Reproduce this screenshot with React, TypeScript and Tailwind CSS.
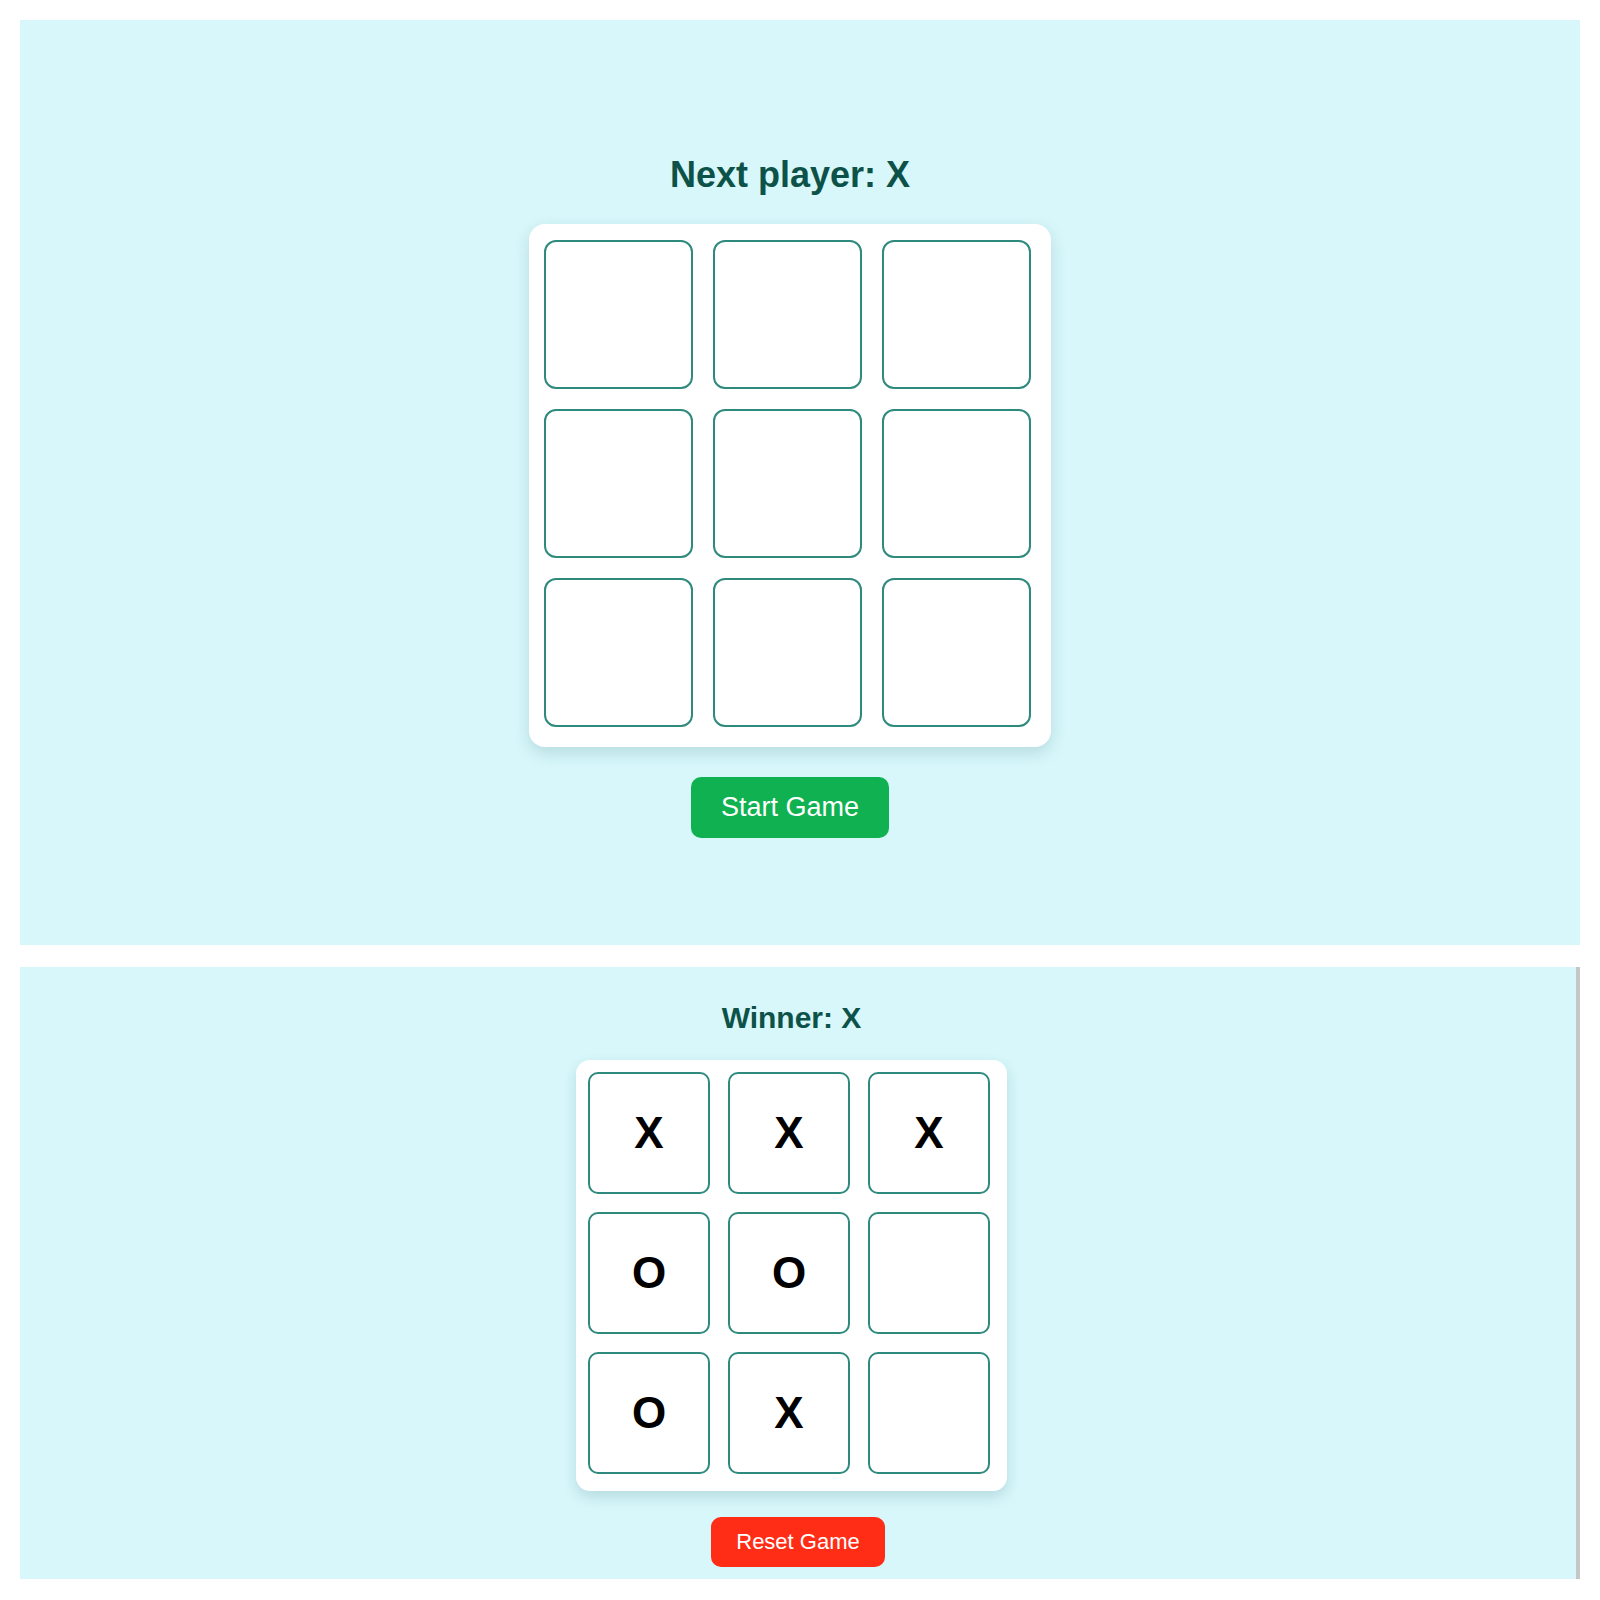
import { useState } from "react";

type Cell = "X" | "O" | null;

const FONT = { fontFamily: '"Liberation Sans", Arial, sans-serif' };

const emptyBoard: Cell[] = Array(9).fill(null);
const finishedBoard: Cell[] = ["X", "X", "X", "O", "O", null, "O", "X", null];

const App = () => {
  const [board, setBoard] = useState<Cell[]>(emptyBoard);
  const [xNext, setXNext] = useState(true);

  const play = (i: number) => {
    if (board[i]) return;
    const next = [...board];
    next[i] = xNext ? "X" : "O";
    setBoard(next);
    setXNext(!xNext);
  };

  return (
    <div className="min-h-screen bg-white pt-[20px]" style={FONT}>
      {/* first screen: fresh game */}
      <section className="ml-[20px] w-[1560px] h-[925px] bg-[#d7f7fa] flex flex-col items-center pt-[137px] pr-[20px]">
        <h2 className="text-[36px] leading-[36px] font-bold text-[#0c5248] mb-[31px]">
          Next player: {xNext ? "X" : "O"}
        </h2>

        <div className="bg-white rounded-[16px] pt-[16px] pl-[15px] pr-[20px] pb-[20px] shadow-[0_6px_16px_rgba(0,70,80,0.15)] grid grid-cols-[repeat(3,149px)] gap-[20px]">
          {board.map((v, i) => (
            <button
              key={i}
              onClick={() => play(i)}
              className="w-[149px] h-[149px] bg-white rounded-[12px] border-2 border-[#2f8a7e] text-[52px] font-bold text-black"
            >
              {v}
            </button>
          ))}
        </div>

        <button
          onClick={() => {
            setBoard(emptyBoard);
            setXNext(true);
          }}
          className="mt-[30px] bg-[#0fb150] text-white text-[27px] leading-[31px] px-[30px] py-[15px] rounded-[10px]"
        >
          Start Game
        </button>
      </section>

      {/* second screen: finished game */}
      <section className="mt-[22px] ml-[20px] w-[1560px] h-[612px] bg-[#d7f7fa] border-r-4 border-[#c6c6c6] flex flex-col items-center pt-[36px] pr-[13px]">
        <h2 className="text-[30px] leading-[30px] font-bold text-[#0c5248] mb-[27px]">Winner: X</h2>

        <div className="bg-white rounded-[14px] pt-[12px] pl-[12px] pr-[17px] pb-[17px] shadow-[0_6px_14px_rgba(0,70,80,0.15)] grid grid-cols-[repeat(3,122px)] gap-[18px]">
          {finishedBoard.map((v, i) => (
            <div
              key={i}
              className="w-[122px] h-[122px] bg-white rounded-[10px] border-2 border-[#2f8a7e] flex items-center justify-center text-[44px] font-bold text-black"
            >
              {v}
            </div>
          ))}
        </div>

        <button className="mt-[26px] ml-[13px] bg-[#ff2c16] text-white text-[22px] leading-[26px] px-[25px] py-[12px] rounded-[10px]">
          Reset Game
        </button>
      </section>
    </div>
  );
};

export default App;
